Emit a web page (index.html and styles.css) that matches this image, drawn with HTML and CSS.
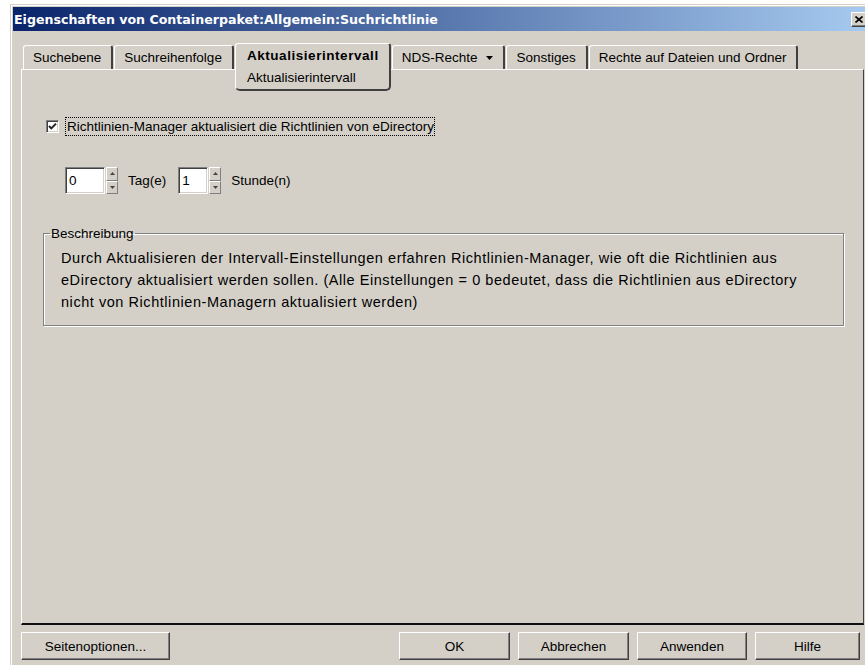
FILE: index.html
```html
<!DOCTYPE html>
<html lang="de">
<head>
<meta charset="utf-8">
<title>Eigenschaften von Containerpaket:Allgemein:Suchrichtlinie</title>
<link rel="stylesheet" href="styles.css">
</head>
<body>
<div class="window">
  <div class="titlebar">
    <span class="title">Eigenschaften von Containerpaket:Allgemein:Suchrichtlinie</span>
    <span class="close">
      <svg width="8" height="7" viewBox="0 0 8 7"><path d="M0.5 0.5 L7.5 6.5 M7.5 0.5 L0.5 6.5" stroke="#000" stroke-width="1.6" fill="none"/></svg>
    </span>
  </div>

  <div class="tabs">
    <div class="tab">Suchebene</div>
    <div class="tab">Suchreihenfolge</div>
    <div class="tab tab-active">
      <div class="tab-title">Aktualisierintervall</div>
      <div class="tab-sub">Aktualisierintervall</div>
    </div>
    <div class="tab">NDS-Rechte
      <svg class="tab-arrow" width="7" height="4" viewBox="0 0 7 4"><path d="M0 0 H7 L3.5 4 Z" fill="#000"/></svg>
    </div>
    <div class="tab">Sonstiges</div>
    <div class="tab">Rechte auf Dateien und Ordner</div>
  </div>

  <div class="panel">
    <div class="check-row">
      <span class="checkbox">
        <svg width="9" height="9" viewBox="0 0 9 9"><path d="M1 4 L3.3 6.4 L8 1.6" stroke="#222" stroke-width="2" fill="none"/></svg>
      </span>
      <span class="check-label">Richtlinien-Manager aktualisiert die Richtlinien von eDirectory</span>
    </div>

    <div class="spin-row">
      <div class="spinner">
        <span class="field field-wide">0</span>
        <span class="spin-btns">
          <span class="spin"><svg width="5" height="3" viewBox="0 0 5 3"><path d="M2.5 0 L5 3 H0 Z" fill="#444"/></svg></span>
          <span class="spin"><svg width="5" height="3" viewBox="0 0 5 3"><path d="M0 0 H5 L2.5 3 Z" fill="#444"/></svg></span>
        </span>
      </div>
      <span class="unit">Tag(e)</span>
      <div class="spinner">
        <span class="field field-narrow">1</span>
        <span class="spin-btns">
          <span class="spin"><svg width="5" height="3" viewBox="0 0 5 3"><path d="M2.5 0 L5 3 H0 Z" fill="#444"/></svg></span>
          <span class="spin"><svg width="5" height="3" viewBox="0 0 5 3"><path d="M0 0 H5 L2.5 3 Z" fill="#444"/></svg></span>
        </span>
      </div>
      <span class="unit">Stunde(n)</span>
    </div>

    <fieldset class="group">
      <legend>Beschreibung</legend>
      <p class="desc">Durch Aktualisieren der Intervall-Einstellungen erfahren Richtlinien-Manager, wie oft die Richtlinien aus<br>eDirectory aktualisiert werden sollen. (Alle Einstellungen = 0 bedeutet, dass die Richtlinien aus eDirectory<br>nicht von Richtlinien-Managern aktualisiert werden)</p>
    </fieldset>
  </div>

  <div class="buttons">
    <button class="btn btn-options">Seitenoptionen...</button>
    <span class="spacer"></span>
    <button class="btn">OK</button>
    <button class="btn">Abbrechen</button>
    <button class="btn btn-apply">Anwenden</button>
    <button class="btn btn-help">Hilfe</button>
  </div>
</div>
</body>
</html>
```

FILE: styles.css
```css
* {
  box-sizing: border-box;
}

html,
body {
  margin: 0;
  height: 100%;
}

body {
  background: #ffffff;
  overflow: hidden;
  font-family: "Liberation Sans", Arial, sans-serif;
  font-size: 13.5px;
  color: #000;
}

/* dialog frame */
.window {
  margin: 4px 0 0 10px;
  width: 862px;
  background: #d4d0c8;
  border: 1px solid;
  border-color: #d4d0c8 #404040 #404040 #d4d0c8;
  box-shadow: inset 1px 1px 0 #ffffff, inset -1px -1px 0 #808080;
  padding: 2px;
  display: flex;
  flex-direction: column;
}

.titlebar {
  height: 24px;
  display: flex;
  align-items: center;
  padding: 0 2px 0 1px;
  background: linear-gradient(to right, #0a246a, #a6caf0);
  color: #fff;
  font-family: "DejaVu Sans", Verdana, sans-serif;
  font-weight: bold;
  font-size: 12.6px;
}

.title {
  flex: 1;
  white-space: nowrap;
}

.close {
  width: 16px;
  height: 15px;
  display: flex;
  align-items: center;
  justify-content: center;
  background: #d4d0c8;
  border: 1px solid;
  border-color: #ffffff #404040 #404040 #ffffff;
  box-shadow: inset -1px -1px 0 #808080;
}

/* tab strip */
.tabs {
  height: 38px;
  display: flex;
  align-items: flex-start;
  padding: 12px 0 0 10px;
}

.tab {
  height: 24px;
  margin-top: 2px;
  padding: 0 10px 0 9px;
  display: flex;
  align-items: center;
  white-space: nowrap;
  border-top: 1px solid #ffffff;
  border-left: 1px solid #ffffff;
  border-right: 2px solid #404040;
  border-radius: 3px 3px 0 0;
}

.tab + .tab {
  margin-left: 1px;
}

.tab-active {
  position: relative;
  z-index: 2;
  height: 48px;
  margin-top: 0;
  padding: 1px 10px 0 11px;
  flex-direction: column;
  align-items: flex-start;
  background: #d4d0c8;
  border-bottom: 2px solid #404040;
  border-radius: 3px 3px 5px 5px;
}

.tab-title {
  font-weight: bold;
  letter-spacing: 0.55px;
  line-height: 22px;
}

.tab-sub {
  line-height: 21px;
}

.tab-arrow {
  margin-left: 9px;
}

/* page area */
.panel {
  height: 556px;
  margin: 0 5px 0 8px;
  padding: 47px 0 0 0;
  border: 1px solid;
  border-bottom-width: 2px;
  border-color: #ffffff #404040 #101010 #ffffff;
}

.check-row {
  display: flex;
  align-items: center;
  padding-left: 24px;
  height: 19px;
}

.checkbox {
  width: 13px;
  height: 13px;
  display: flex;
  align-items: center;
  justify-content: center;
  background: #fff;
  border: 1px solid;
  border-color: #808080 #ffffff #ffffff #808080;
  box-shadow: inset 1px 1px 0 #404040, inset -1px -1px 0 #d4d0c8;
  margin-right: 6px;
}

.check-label {
  border: 1px dotted #000;
  padding: 0 0 0 1px;
  line-height: 17px;
  white-space: nowrap;
}

.spin-row {
  display: flex;
  align-items: center;
  margin-top: 31px;
  padding-left: 43px;
  height: 27px;
}

.spinner {
  display: flex;
  height: 27px;
}

.field {
  height: 27px;
  padding-left: 3px;
  display: flex;
  align-items: center;
  background: #fff;
  border: 1px solid;
  border-color: #808080 #ffffff #ffffff #808080;
  box-shadow: inset 1px 1px 0 #404040, inset -1px -1px 0 #d4d0c8;
}

.field-wide {
  width: 40px;
}

.field-narrow {
  width: 30px;
}

.spin-btns {
  display: flex;
  flex-direction: column;
  width: 12px;
  margin-left: 1px;
}

.spin {
  flex: 1;
  display: flex;
  align-items: center;
  justify-content: center;
  background: #d4d0c8;
  border: 1px solid;
  border-color: #ffffff #808080 #808080 #ffffff;
}

.unit {
  margin: 0 12px 0 10px;
  white-space: nowrap;
}

/* description box */
.group {
  margin: 31px 19px 0 21px;
  padding: 5px 16px 12px 17px;
  border: 1px solid #808080;
  box-shadow: 1px 1px 0 #ffffff, inset 1px 1px 0 #ffffff;
  min-inline-size: 0;
}

.group legend {
  margin-left: -11px;
  padding: 0 1px;
  line-height: 17px;
}

.desc {
  margin: 0;
  font-size: 14.5px;
  letter-spacing: 0.55px;
  line-height: 22px;
  white-space: nowrap;
}

/* button bar */
.buttons {
  display: flex;
  gap: 8px;
  padding: 7px 9px 8px 8px;
}

.spacer {
  flex: 1;
}

.btn {
  width: 111px;
  height: 28px;
  padding: 0;
  font-family: "Liberation Sans", Arial, sans-serif;
  font-size: 13.5px;
  color: #000;
  background: #d4d0c8;
  border: 1px solid;
  border-color: #ffffff #404040 #404040 #ffffff;
  box-shadow: inset -1px -1px 0 #808080;
}

.btn-options {
  width: 149px;
}

.btn-apply {
  width: 110px;
}

.btn-help {
  width: 105px;
}
```
